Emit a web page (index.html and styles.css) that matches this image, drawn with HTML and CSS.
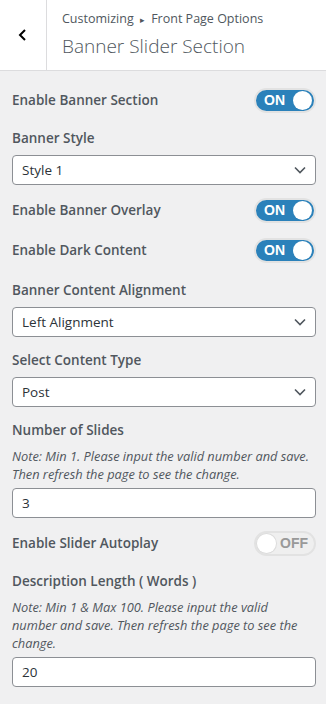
FILE: index.html
```html
<!DOCTYPE html>
<html lang="en">
<head>
  <meta charset="UTF-8" />
  <meta name="viewport" content="width=device-width, initial-scale=1" />
  <title>Banner Slider Section</title>
  <link rel="stylesheet" href="styles.css">
</head>
<body>
  <div class="panel-header">
    <button class="back-btn" aria-label="Back">
      <svg viewBox="0 0 10 12" width="10" height="12">
        <polyline points="7,1 2,6 7,11" fill="none" stroke="#000" stroke-width="2"/>
      </svg>
    </button>
    <div class="panel-title">
      <div class="crumbs">Customizing <span class="crumb-sep">&#9656;</span> Front Page Options</div>
      <h2>Banner Slider Section</h2>
    </div>
  </div>

  <div class="controls">
    <!-- toggle rows -->
    <div class="toggle-row first">
      <span class="ctrl-label">Enable Banner Section</span>
      <span class="switch on"><span class="switch-text">ON</span><span class="knob"></span></span>
    </div>

    <div class="field">
      <div class="ctrl-label">Banner Style</div>
      <div class="select">Style 1
        <svg class="caret" viewBox="0 0 12 8" width="12" height="8"><polyline points="1,1.5 6,6.5 11,1.5" fill="none" stroke="#50575e" stroke-width="1.6"/></svg>
      </div>
    </div>

    <div class="toggle-row">
      <span class="ctrl-label">Enable Banner Overlay</span>
      <span class="switch on"><span class="switch-text">ON</span><span class="knob"></span></span>
    </div>

    <div class="toggle-row extra">
      <span class="ctrl-label">Enable Dark Content</span>
      <span class="switch on"><span class="switch-text">ON</span><span class="knob"></span></span>
    </div>

    <div class="field">
      <div class="ctrl-label">Banner Content Alignment</div>
      <div class="select">Left Alignment
        <svg class="caret" viewBox="0 0 12 8" width="12" height="8"><polyline points="1,1.5 6,6.5 11,1.5" fill="none" stroke="#50575e" stroke-width="1.6"/></svg>
      </div>
    </div>

    <div class="field">
      <div class="ctrl-label">Select Content Type</div>
      <div class="select">Post
        <svg class="caret" viewBox="0 0 12 8" width="12" height="8"><polyline points="1,1.5 6,6.5 11,1.5" fill="none" stroke="#50575e" stroke-width="1.6"/></svg>
      </div>
    </div>

    <div class="field">
      <div class="ctrl-label">Number of Slides</div>
      <p class="note">Note: Min 1. Please input the valid number and save. Then refresh the page to see the change.</p>
      <div class="text-input">3</div>
    </div>

    <div class="toggle-row">
      <span class="ctrl-label">Enable Slider Autoplay</span>
      <span class="switch off"><span class="knob"></span><span class="switch-text">OFF</span></span>
    </div>

    <div class="field">
      <div class="ctrl-label">Description Length ( Words )</div>
      <p class="note">Note: Min 1 &amp; Max 100. Please input the valid number and save. Then refresh the page to see the change.</p>
      <div class="text-input">20</div>
    </div>
  </div>
</body>
</html>
```

FILE: styles.css
```css
body {
  margin: 0;
  background: #f0f0f1;
  font-family: "Open Sans", "Noto Sans", sans-serif;
  color: #50575e;
}
.panel-header {
  display: flex;
  height: 70px;
  background: #fff;
  border-bottom: 1px solid #dcdcde;
}
.back-btn {
  width: 47px;
  border: 0;
  border-right: 1px solid #dcdcde;
  background: #fff;
  padding: 0;
  display: flex;
  align-items: center;
  justify-content: center;
}
.panel-title {
  padding: 9px 0 0 15px;
}
.crumbs {
  font-size: 12.5px;
  line-height: 20px;
  color: #50575e;
}
.crumb-sep {
  font-size: 9px;
  margin: 0 3px;
}
.panel-title h2 {
  margin: 2px 0 0;
  font-size: 19px;
  line-height: 28px;
  font-weight: 300;
  color: #50575e;
}
.controls {
  padding: 17px 10px 12px 12px;
}
.ctrl-label {
  font-size: 13.5px;
  font-weight: 600;
  line-height: 20px;
  color: #50575e;
}
.toggle-row {
  display: flex;
  align-items: center;
  justify-content: space-between;
  height: 24px;
  margin-bottom: 16px;
}
.toggle-row.extra {
  margin-bottom: 18px;
}
.field {
  margin-bottom: 13px;
}
.field .ctrl-label {
  margin-bottom: 7px;
}
.switch {
  box-sizing: border-box;
  width: 62px;
  height: 25px;
  border-radius: 13px;
  border: 2px solid #e2e2e2;
  display: flex;
  align-items: center;
  justify-content: space-between;
  padding: 0 2px 0 8px;
  font-family: "Liberation Sans", Arial, sans-serif;
  font-weight: bold;
  font-size: 14px;
}
.switch.on {
  background: #2b81ba;
  color: #fff;
}
.switch.off {
  background: #efefef;
  color: #999;
  padding: 0 6px 0 1px;
}
.knob {
  width: 19px;
  height: 19px;
  border-radius: 50%;
  background: #fff;
}
.switch.off .knob {
  box-shadow: 0 0 0 1px #dcdcdc;
}
.select,
.text-input {
  box-sizing: border-box;
  height: 30px;
  background: #fff;
  border: 1px solid #8c8f94;
  border-radius: 4px;
  padding: 0 9px;
  display: flex;
  align-items: center;
  justify-content: space-between;
  font-size: 13.5px;
  color: #2c3338;
}
.note {
  margin: 1px 6px 5px 0;
  font-size: 12.8px;
  font-style: italic;
  line-height: 18px;
  color: #50575e;
}
```
